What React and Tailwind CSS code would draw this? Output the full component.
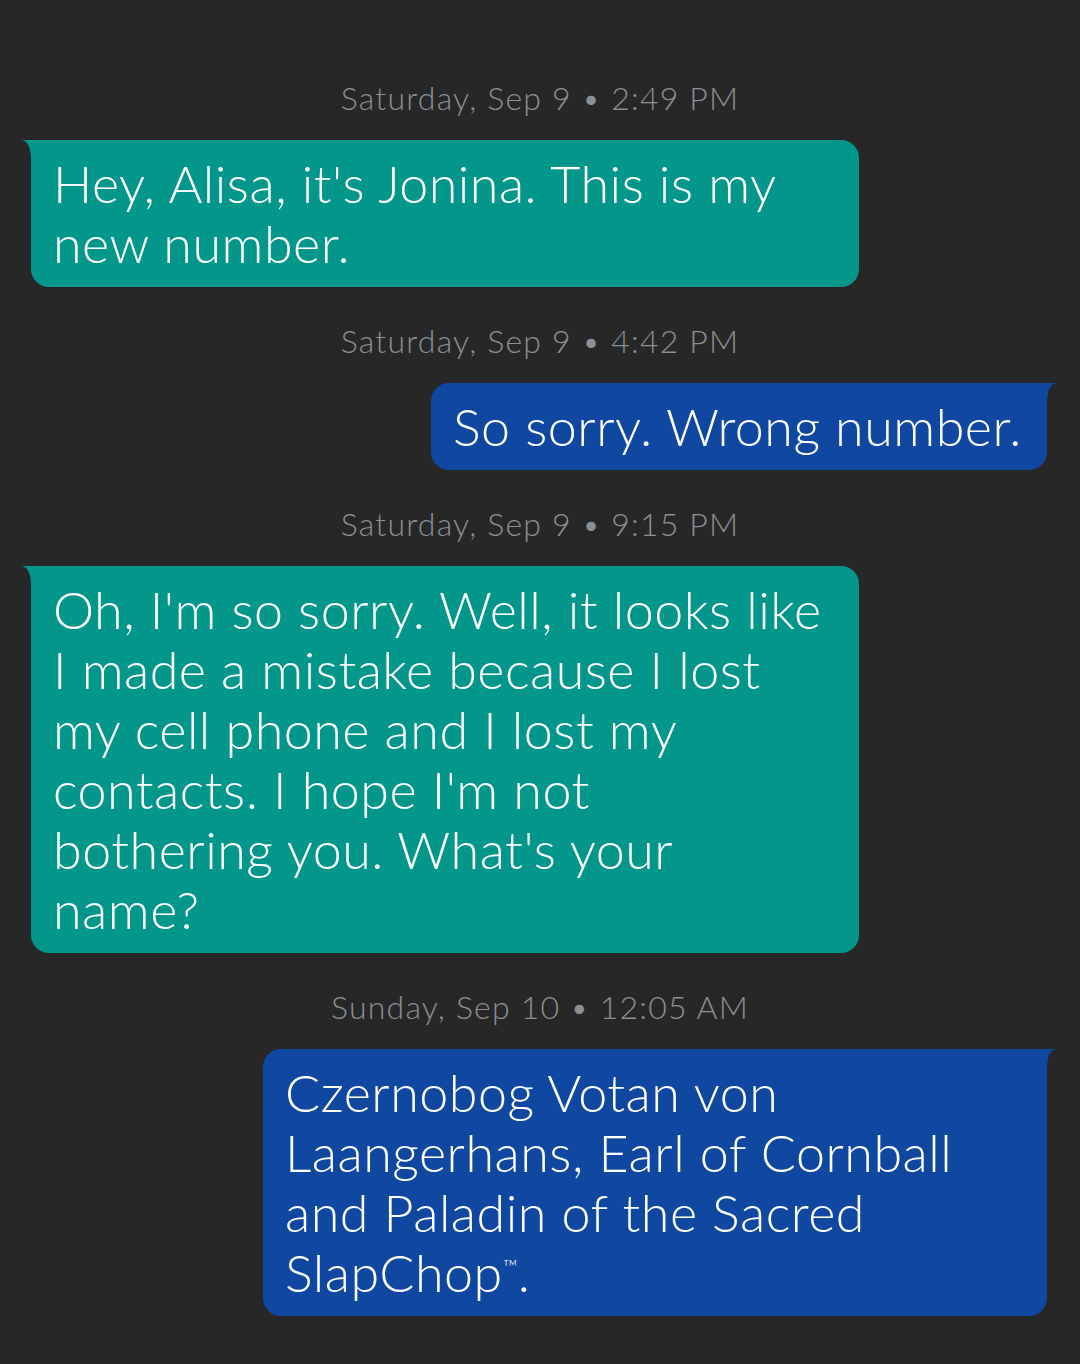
import React from "react";

const messages = [
  {
    time: "Saturday, Sep 9 • 2:49 PM",
    mine: false,
    width: "w-[828px]",
    lines: ["Hey, Alisa, it's Jonina. This is my", "new number."],
  },
  {
    time: "Saturday, Sep 9 • 4:42 PM",
    mine: true,
    width: "w-[616px]",
    lines: ["So sorry. Wrong number."],
  },
  {
    time: "Saturday, Sep 9 • 9:15 PM",
    mine: false,
    width: "w-[828px]",
    lines: [
      "Oh, I'm so sorry. Well, it looks like",
      "I made a mistake because I lost",
      "my cell phone and I lost my",
      "contacts. I hope I'm not",
      "bothering you. What's your",
      "name?",
    ],
  },
  {
    time: "Sunday, Sep 10 • 12:05 AM",
    mine: true,
    width: "w-[784px]",
    lines: [
      "Czernobog Votan von",
      "Laangerhans, Earl of Cornball",
      "and Paladin of the Sacred",
      <>
        SlapChop
        <span className="relative top-[-18px] text-[20px] tracking-normal">™</span>.
      </>,
    ],
  },
];

function Tail({ mine }) {
  // little flared corner at the top of each bubble
  if (mine) {
    return (
      <svg
        className="absolute top-0 right-[-11px]"
        width="12"
        height="20"
        viewBox="0 0 12 20"
      >
        <path d="M0 0 L12 0 Q1 0 1 20 L0 20 Z" fill="#0f47a1" />
      </svg>
    );
  }
  return (
    <svg
      className="absolute top-0 left-[-11px]"
      width="12"
      height="20"
      viewBox="0 0 12 20"
    >
      <path d="M12 0 L0 0 Q11 0 11 20 L12 20 Z" fill="#03968a" />
    </svg>
  );
}

function Bubble({ msg }) {
  const color = msg.mine
    ? "bg-[#0f47a1] rounded-[18px] rounded-tr-none"
    : "bg-[#03968a] rounded-[18px] rounded-tl-none";
  return (
    <div className={`flex ${msg.mine ? "justify-end pr-[33px]" : "justify-start pl-[31px]"}`}>
      <div className={`relative ${msg.width} ${color} px-[22px] pt-[13px] pb-[14px]`}>
        <Tail mine={msg.mine} />
        {msg.lines.map((line, i) => (
          <div key={i} className="h-[60px] leading-[60px] whitespace-nowrap text-white">
            {line}
          </div>
        ))}
      </div>
    </div>
  );
}

export default function App() {
  return (
    <div
      className="min-h-[1364px] w-[1080px] bg-[#272727] pt-[78px] font-light"
      style={{ fontFamily: "Lato, 'Noto Sans', sans-serif" }}
    >
      {messages.map((msg, i) => (
        <div key={i} className={i > 0 ? "mt-[34px]" : ""}>
          <div className="h-[40px] text-center text-[32px] leading-[40px] tracking-[1.2px] text-[#8c8f93]">
            {msg.time}
          </div>
          <div className="mt-[22px] text-[52px] tracking-[0.5px]">
            <Bubble msg={msg} />
          </div>
        </div>
      ))}
    </div>
  );
}
